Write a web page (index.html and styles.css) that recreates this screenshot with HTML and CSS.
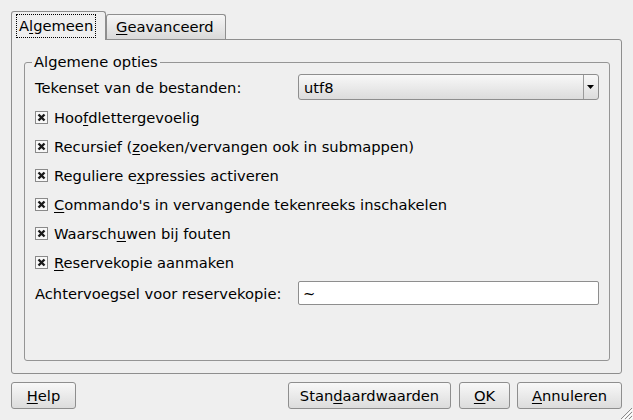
FILE: index.html
```html
<!DOCTYPE html>
<html lang="nl">
<head>
<meta charset="utf-8">
<title>Instellingen</title>
<link rel="stylesheet" href="styles.css">
</head>
<body>
<div class="dialog">
  <div class="tabs">
    <div class="tab tab-active"><span class="focus">A<u>l</u>gemeen</span></div>
    <div class="tab tab-inactive"><u>G</u>eavanceerd</div>
  </div>
  <div class="panel">
    <fieldset class="group">
      <legend class="group-title">Algemene opties</legend>
      <div class="form">
        <div class="row row-combo">
          <span class="label">Tekenset van de bestanden:</span>
          <div class="combo">
            <span class="combo-text">utf8</span>
            <span class="combo-arrow"><svg width="8" height="5" viewBox="0 0 8 5"><polygon points="0,0 7,0 3.5,4" fill="#000"/></svg></span>
          </div>
        </div>
        <div class="checks">
          <div class="check-row"><svg class="cb" width="13" height="13" viewBox="0 0 13 13"><rect x="0.5" y="0.5" width="12" height="12" fill="#f8f8f8" stroke="#8a8a8a"/><path d="M3.5 3.5L9.5 9.5M9.5 3.5L3.5 9.5" stroke="#1a1a1a" stroke-width="2.4"/></svg><span>Hoo<u>f</u>dlettergevoelig</span></div>
          <div class="check-row"><svg class="cb" width="13" height="13" viewBox="0 0 13 13"><rect x="0.5" y="0.5" width="12" height="12" fill="#f8f8f8" stroke="#8a8a8a"/><path d="M3.5 3.5L9.5 9.5M9.5 3.5L3.5 9.5" stroke="#1a1a1a" stroke-width="2.4"/></svg><span>Recursief (<u>z</u>oeken/vervangen ook in submappen)</span></div>
          <div class="check-row"><svg class="cb" width="13" height="13" viewBox="0 0 13 13"><rect x="0.5" y="0.5" width="12" height="12" fill="#f8f8f8" stroke="#8a8a8a"/><path d="M3.5 3.5L9.5 9.5M9.5 3.5L3.5 9.5" stroke="#1a1a1a" stroke-width="2.4"/></svg><span>Reguliere e<u>x</u>pressies activeren</span></div>
          <div class="check-row"><svg class="cb" width="13" height="13" viewBox="0 0 13 13"><rect x="0.5" y="0.5" width="12" height="12" fill="#f8f8f8" stroke="#8a8a8a"/><path d="M3.5 3.5L9.5 9.5M9.5 3.5L3.5 9.5" stroke="#1a1a1a" stroke-width="2.4"/></svg><span><u>C</u>ommando's in vervangende tekenreeks inschakelen</span></div>
          <div class="check-row"><svg class="cb" width="13" height="13" viewBox="0 0 13 13"><rect x="0.5" y="0.5" width="12" height="12" fill="#f8f8f8" stroke="#8a8a8a"/><path d="M3.5 3.5L9.5 9.5M9.5 3.5L3.5 9.5" stroke="#1a1a1a" stroke-width="2.4"/></svg><span>Waarsch<u>u</u>wen bij fouten</span></div>
          <div class="check-row"><svg class="cb" width="13" height="13" viewBox="0 0 13 13"><rect x="0.5" y="0.5" width="12" height="12" fill="#f8f8f8" stroke="#8a8a8a"/><path d="M3.5 3.5L9.5 9.5M9.5 3.5L3.5 9.5" stroke="#1a1a1a" stroke-width="2.4"/></svg><span><u>R</u>eservekopie aanmaken</span></div>
        </div>
        <div class="row row-input">
          <span class="label">Achtervoegsel voor reservekopie:</span>
          <div class="lineedit">~</div>
        </div>
      </div>
    </fieldset>
  </div>
  <div class="buttons">
    <div class="btn btn-help"><u>H</u>elp</div>
    <div class="spacer"></div>
    <div class="btn btn-defaults">Stan<u>d</u>aardwaarden</div>
    <div class="btn btn-ok"><u>O</u>K</div>
    <div class="btn btn-cancel"><u>A</u>nnuleren</div>
  </div>
  <svg class="grip" width="14" height="14" viewBox="0 0 14 14">
    <path d="M13 2L2 13M13 6L6 13M13 10L10 13" stroke="#8a8a8a" stroke-width="1"/>
    <path d="M14 3L3 14M14 7L7 14M14 11L11 14" stroke="#ffffff" stroke-width="1"/>
  </svg>
</div>
</body>
</html>
```

FILE: styles.css
```css
* { box-sizing: border-box; }
html, body { margin: 0; height: 100%; }
body {
  background: #efefef;
  font-family: "DejaVu Sans", "Liberation Sans", sans-serif;
  font-size: 14.7px;
  line-height: 17px;
  color: #000;
  overflow: hidden;
}
u { text-underline-offset: 2px; }

.dialog {
  position: relative;
  height: 420px;
  display: flex;
  flex-direction: column;
  padding: 11px 11px 0 11px;
}

/* tabs */
.tabs {
  display: flex;
  align-items: flex-end;
  height: 28px;
  position: relative;
  z-index: 1;
}
.tab {
  border: 1px solid #8e8e8e;
  border-bottom: none;
  border-radius: 3px 3px 0 0;
}
.tab-active {
  width: 95px;
  height: 29px;
  margin-bottom: -1px;
  background: #efefef;
  padding: 3px 0 0 5px;
}
.focus {
  display: inline-block;
  outline: 1px dotted #000;
  padding: 2px 2px 3px 2px;
  height: 22px;
}
.tab-inactive {
  width: 120px;
  height: 25px;
  background: linear-gradient(#f6f6f6, #d9d9d9);
  padding: 3px 0 0 9px;
}

/* panel */
.panel {
  height: 335px;
  flex: none;
  border: 1px solid #8e8e8e;
  border-radius: 0 3px 3px 3px;
  padding: 14px 11px 12px 12px;
  display: flex;
  flex-direction: column;
}
.group {
  flex: 1;
  margin: 0;
  min-width: 0;
  border: 1px solid #959595;
  border-radius: 3px;
  padding: 4px 10px 0 10px;
}
.group-title {
  margin-left: -3px;
  padding: 0 2px;
  line-height: 16px;
}
.form {
  display: flex;
  flex-direction: column;
}
.row {
  display: flex;
  align-items: center;
  justify-content: space-between;
}
.row-combo { height: 26px; }
.combo {
  width: 301px;
  height: 26px;
  border: 1px solid #8e8e8e;
  border-radius: 3px;
  background: linear-gradient(#f8f8f8, #dcdcdc);
  display: flex;
  align-items: center;
}
.combo-text {
  flex: 1;
  padding-left: 5px;
}
.combo-arrow {
  width: 15px;
  height: 100%;
  border-left: 1px solid #9a9a9a;
  display: flex;
  align-items: center;
  justify-content: center;
}

.checks {
  margin-top: 3px;
  display: flex;
  flex-direction: column;
}
.check-row {
  height: 29px;
  display: flex;
  align-items: center;
  gap: 6px;
}
.cb { flex: none; }

.row-input {
  margin-top: 4px;
  height: 24px;
}
.lineedit {
  width: 301px;
  height: 24px;
  border: 1px solid #8e8e8e;
  border-radius: 2px;
  background: #fff;
  padding: 3px 0 0 4px;
  line-height: 17px;
}

/* buttons */
.buttons {
  margin-top: 8px;
  height: 27px;
  display: flex;
}
.spacer { flex: 1; }
.btn {
  height: 27px;
  border: 1px solid #8e8e8e;
  border-radius: 3px;
  background: linear-gradient(#f8f8f8, #dcdcdc);
  display: flex;
  align-items: center;
  justify-content: center;
}
.btn-help { width: 65px; }
.btn-defaults { width: 163px; }
.btn-ok { width: 51px; margin-left: 8px; }
.btn-cancel { width: 105px; margin-left: 7px; }

.grip {
  position: absolute;
  right: 0;
  bottom: 0;
}
```
